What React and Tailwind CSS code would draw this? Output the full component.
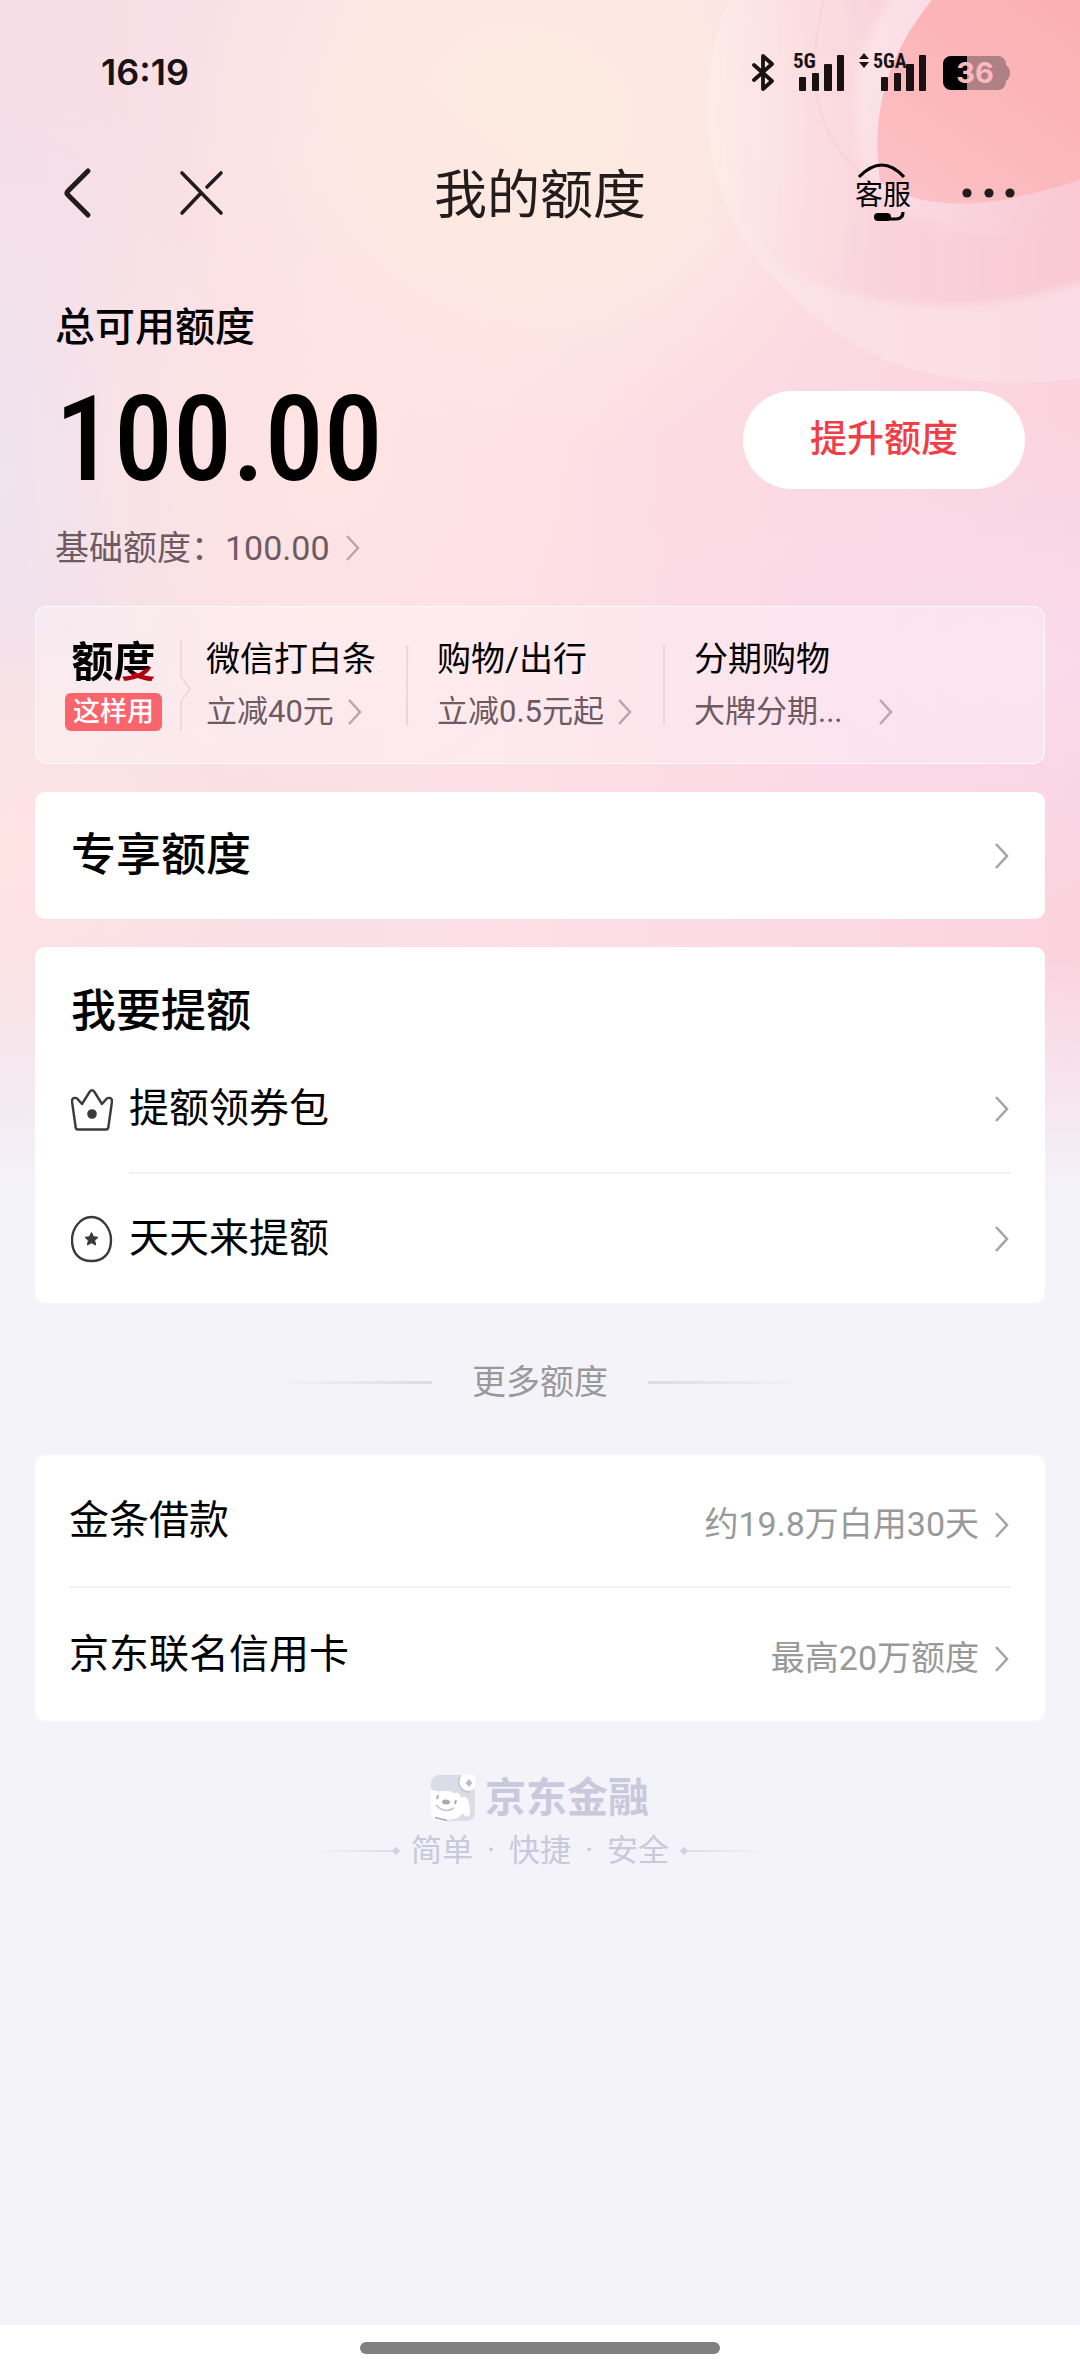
const promos = [
  { title: '微信打白条', desc: '立减40元', box: 'w-[214px] pl-[14px]', gap: 'gap-[14px]' },
  { title: '购物/出行', desc: '立减0.5元起', box: 'w-[255px] pl-[29px]', gap: 'gap-[14px]' },
  { title: '分期购物', desc: '大牌分期...', box: 'flex-1 pl-[29px]', gap: 'gap-9' }
]

const moreLimits = [
  { name: '金条借款', note: '约19.8万白用30天' },
  { name: '京东联名信用卡', note: '最高20万额度' }
]

function Arrow({ className = 'text-[#a3a3a3]' }) {
  return (
    <svg className={`h-7 w-4 shrink-0 ${className}`} viewBox="0 0 16 28" fill="none" stroke="currentColor" strokeWidth="2.5">
      <path d="M1 2l11 12L1 26" />
    </svg>
  )
}

function Signal() {
  return (
    <svg className="h-10 w-[50px]" viewBox="0 0 50 40" fill="#1a1212">
      <rect x="4" y="24" width="7" height="14" rx="1" />
      <rect x="17" y="20" width="7" height="18" rx="1" />
      <rect x="29" y="11" width="8" height="27" rx="1" />
      <rect x="42" y="2" width="7" height="36" rx="1" />
    </svg>
  )
}

function StatusBar() {
  return (
    <div className="flex h-[146px] items-center justify-between pl-[101px] pr-[70px]">
      <span className="pb-[2px] font-['Inter'] text-[36px] font-semibold text-[#1a1212]">16:19</span>
      <div className="flex items-center">
        <svg className="mr-5 h-10 w-6" viewBox="0 0 24 40" fill="none" stroke="#1a1212" strokeWidth="3.8" strokeLinecap="round" strokeLinejoin="round">
          <path d="M3 12l18 16-9 8V3l9 8L3 27" />
        </svg>
        <div className="relative">
          <Signal />
          <span className="absolute -left-[2px] top-0 font-['Roboto_Condensed','Roboto'] text-[21px] font-bold leading-4 text-[#1a1212]">5G</span>
        </div>
        <div className="relative ml-8">
          <Signal />
          <svg className="absolute -left-[18px] top-0 h-4 w-[10px]" viewBox="0 0 10 16" fill="#1a1212">
            <path d="M5 0l5 6H0zM5 15l5-6H0z" />
          </svg>
          <span className="absolute -left-1 top-0 font-['Roboto_Condensed','Roboto'] text-[20px] font-bold leading-4 text-[#1a1212]">5GA</span>
        </div>
        <svg className="ml-4 h-9 w-[67px]" viewBox="0 0 67 36">
          <path d="M8 1h47a8 8 0 0 1 8 8v1q4 3 4 8t-4 8v1a8 8 0 0 1-8 8H8a8 8 0 0 1-8-8V9a8 8 0 0 1 8-8z" fill="#ad8186" />
          <path d="M8 1h16v34H8a8 8 0 0 1-8-8V9a8 8 0 0 1 8-8z" fill="#000" />
          <text x="32" y="28" textAnchor="middle" fontFamily="Inter" fontWeight="700" fontSize="29" fill="#fdb9bc">36</text>
        </svg>
      </div>
    </div>
  )
}

function NavBar() {
  return (
    <header className="grid h-[100px] grid-cols-[1fr_auto_1fr] items-center">
      <div className="flex items-center pb-[6px]">
        <button aria-label="返回" className="ml-[62px]">
          <svg className="h-[54px] w-8" viewBox="0 0 32 54" fill="none" stroke="#231c1c" strokeWidth="5" strokeLinecap="round" strokeLinejoin="round">
            <path d="M26 5L6 25q-2 2 0 4l20 20" />
          </svg>
        </button>
        <button aria-label="关闭" className="ml-[84px]">
          <svg className="h-12 w-12" viewBox="0 0 48 48" fill="none" stroke="#231c1c" strokeWidth="3.6" strokeLinecap="round">
            <path d="M4 4l39 40M43 4L29 18M23 24L4 44" />
          </svg>
        </button>
      </div>
      <h1 className="text-[53px] leading-[64px] text-[#231c1c]">我的额度</h1>
      <div className="flex items-center justify-end pr-[64px]">
        <button className="relative text-[28px] leading-9 text-black">
          客服
          <svg className="absolute -top-4 left-0 h-[60px] w-14" viewBox="0 0 56 60" fill="none" stroke="#000">
            <path d="M4 15Q27-9 49 15" strokeWidth="3.2" />
            <path d="M30 57h11q7 0 7-7" strokeWidth="3.2" />
            <rect x="19" y="51" width="17" height="8" rx="4" fill="#000" stroke="none" />
          </svg>
        </button>
        <button aria-label="更多" className="ml-[51px] pb-[6px]">
          <svg className="h-3 w-[54px]" viewBox="0 0 54 12" fill="#231c1c">
            <circle cx="5" cy="6" r="4.6" />
            <circle cx="27" cy="6" r="4.6" />
            <circle cx="48" cy="6" r="4.6" />
          </svg>
        </button>
      </div>
    </header>
  )
}

function Backdrop() {
  return (
    <svg className="absolute left-0 top-0 -z-10 h-[1200px] w-full" viewBox="0 0 1080 1200" preserveAspectRatio="none">
      <defs>
        <radialGradient id="peach">
          <stop offset="0" stopColor="#fdebe1" />
          <stop offset="0.4" stopColor="#fdebe1" stopOpacity="0.85" />
          <stop offset="1" stopColor="#fdebe1" stopOpacity="0" />
        </radialGradient>
        <radialGradient id="blush">
          <stop offset="0" stopColor="#ffe4e3" />
          <stop offset="1" stopColor="#ffe4e3" stopOpacity="0" />
        </radialGradient>
        <radialGradient id="mist">
          <stop offset="0" stopColor="#efe4ef" />
          <stop offset="1" stopColor="#efe4ef" stopOpacity="0" />
        </radialGradient>
        <radialGradient id="violet">
          <stop offset="0" stopColor="#f9daeb" />
          <stop offset="1" stopColor="#f9daeb" stopOpacity="0" />
        </radialGradient>
        <linearGradient id="base" x1="0" x2="1" y1="0" y2="0">
          <stop offset="0" stopColor="#f6dee6" />
          <stop offset="0.45" stopColor="#fde0e7" />
          <stop offset="1" stopColor="#fbd3df" />
        </linearGradient>
        <linearGradient id="fade" x1="0" x2="0" y1="0" y2="1">
          <stop offset="0" stopColor="#f3f3f9" stopOpacity="0" />
          <stop offset="1" stopColor="#f3f3f9" />
        </linearGradient>
        <linearGradient id="petal" x1="0" x2="1" y1="0" y2="0">
          <stop offset="0" stopColor="#f7c3ce" stopOpacity="0" />
          <stop offset="0.45" stopColor="#f7c3ce" stopOpacity="0.45" />
          <stop offset="1" stopColor="#f7bcc8" stopOpacity="0.65" />
        </linearGradient>
        <linearGradient id="swirl" x1="0" x2="1" y1="0" y2="0.6">
          <stop offset="0" stopColor="#fff" stopOpacity="0.4" />
          <stop offset="1" stopColor="#fff" stopOpacity="0" />
        </linearGradient>
        <linearGradient id="disc" x1="0" x2="0.7" y1="1" y2="0">
          <stop offset="0" stopColor="#fbc2c8" />
          <stop offset="0.5" stopColor="#fcb8bb" />
          <stop offset="1" stopColor="#fbb1b3" />
        </linearGradient>
        <filter id="soft" x="-10%" y="-10%" width="120%" height="120%">
          <feGaussianBlur stdDeviation="4" />
        </filter>
      </defs>
      <rect width="1080" height="1200" fill="url(#base)" />
      <ellipse cx="0" cy="480" rx="260" ry="420" fill="url(#mist)" />
      <ellipse cx="540" cy="120" rx="380" ry="340" fill="url(#peach)" />
      <ellipse cx="330" cy="450" rx="330" ry="380" fill="url(#blush)" />
      <ellipse cx="0" cy="850" rx="300" ry="260" fill="url(#blush)" />
      <ellipse cx="1040" cy="660" rx="480" ry="240" fill="url(#violet)" />
      <path d="M732-10C690 90 702 190 760 262C830 340 900 400 1090 378V-10z" fill="#fff" opacity="0.2" />
      <g filter="url(#soft)">
        <path d="M745-20C705 100 715 200 775 265C840 300 960 330 1100 275V-20z" fill="url(#petal)" />
        <path d="M905-20C840 60 850 120 866 180C890 215 940 245 1100 240V-20z" fill="url(#swirl)" />
      </g>
      <path d="M940-10C880 60 872 120 880 182C930 215 1000 208 1090 176V-10z" fill="url(#disc)" />
      <path d="M826-10C800 90 820 140 868 180" fill="none" stroke="#f9d2d6" strokeWidth="2" />
      <rect y="960" width="1080" height="240" fill="url(#fade)" />
    </svg>
  )
}

function Summary() {
  return (
    <section className="pl-[55px] pr-[55px] pt-[54px]">
      <p className="text-[40px] font-medium leading-[56px]">总可用额度</p>
      <div className="mt-6 flex items-center justify-between">
        <span className="font-['Roboto_Condensed','Roboto'] text-[118px] font-medium leading-[120px]">100.00</span>
        <button className="h-[98px] w-[282px] rounded-full bg-white text-[37px] font-medium text-[#f13e46]">提升额度</button>
      </div>
      <a href="#base" className="mt-6 flex items-center gap-4 text-[34px] leading-[48px] text-[#6e5a62]">
        基础额度：100.00
        <Arrow className="text-[#b9a5ad]" />
      </a>
    </section>
  )
}

function PromoStrip() {
  return (
    <section className="mt-[34px] flex h-[158px] items-center rounded-[12px] border border-white/80 bg-white/30 pl-[29px]">
      <div className="flex w-[97px] shrink-0 flex-col items-center">
        <strong className="bg-linear-[160deg] from-black from-70% to-[#b00010] to-74% bg-clip-text text-[42px] font-bold leading-[48px] text-transparent">额度</strong>
        <span className="mt-[6px] w-full rounded-[6px] bg-[#fa646c] text-center text-[27px] font-medium leading-[38px] text-white">这样用</span>
      </div>
      <svg className="ml-[18px] h-[92px] w-3 shrink-0" viewBox="0 0 12 92" fill="none" stroke="#f5d0d9" strokeWidth="1.5">
        <path d="M1 0v38l9 12-9 12v30" />
      </svg>
      {promos.map((item, i) => (
        <div key={item.title} className={`flex items-center ${i === 2 ? 'flex-1' : 'shrink-0'}`}>
          {i > 0 && <span className="h-20 w-[2px] bg-[#f7d0dc]" />}
          <a href="#promo" className={`flex flex-col whitespace-nowrap ${item.box}`}>
            <span className="text-[34px] leading-[42px]">{item.title}</span>
            <span className={`mt-3 flex items-center text-[31px] leading-10 text-[#6e5a62] ${item.gap}`}>
              {item.desc}
              <Arrow className="text-[#b9a5ad]" />
            </span>
          </a>
        </div>
      ))}
    </section>
  )
}

function CrownIcon() {
  return (
    <svg className="h-12 w-[42px] shrink-0" viewBox="0 0 42 48" fill="none" stroke="#3a3a3a" strokeWidth="2.4" strokeLinejoin="round">
      <path d="M7 43.500h28q2 0 2.300-2L41 15.500q.4-3-2.500-3.600-2.300-.4-3.600 1.700L31 18l-7.500-12q-2.500-3.500-5 0L11 18l-3.900-4.400q-1.300-2.100-3.600-1.700-2.900.6-2.500 3.600L4.700 41.500q.3 2 2.300 2z" />
      <circle cx="21" cy="28" r="4.8" fill="#3a3a3a" stroke="none" />
    </svg>
  )
}

function EggIcon() {
  return (
    <svg className="h-12 w-[42px] shrink-0" viewBox="0 0 42 48" fill="none" stroke="#3a3a3a" strokeWidth="2.4">
      <path d="M20.500 2C32 2 40 14 40 25C40 38 33 46 20.500 46S1 38 1 25C1 14 9 2 20.500 2z" />
      <path d="M20.500 17.500l2 4.200 4.500.6-3.300 3.200.9 4.500-4.100-2.200-4.100 2.200.9-4.500-3.300-3.200 4.500-.6z" fill="#3a3a3a" strokeWidth="1" />
    </svg>
  )
}

function Footer() {
  return (
    <footer className="mt-[52px] flex flex-col items-center text-[#c9c8dd]">
      <div className="flex items-center gap-[10px]">
        <svg className="h-[46px] w-11" viewBox="0 0 44 46">
          <rect width="44" height="46" rx="8" fill="#dcdbe8" />
          <path d="M0 14q4 3 10 2 8-1 13 2 6-1 7 5 3-2 6 0 3 6 3 14 0 6-4 4-2 0-4-3-2 6-10 6-5 2-13 2-8-1-8-8z" fill="#fff" />
          <circle cx="37" cy="7" r="9" fill="#fff" />
          <path d="M29 2q-3 6 1 11 3 4 9 4" fill="none" stroke="#c4c3d2" strokeWidth="1.5" />
          <path d="M38 4l3.500 4-3.500 4-3.500-4z" fill="#bdbccd" />
          <ellipse cx="15" cy="27" rx="4" ry="2.500" transform="rotate(8 15 27)" fill="#a9a9b5" />
          <path d="M7 20l-1 4M25 25l-1 4" stroke="#a9a9b5" strokeWidth="2" />
          <path d="M5 30q8 9 18 3" fill="none" stroke="#c4c4cf" strokeWidth="1.500" />
          <path d="M4 42.500l12 3" stroke="#a9a9b5" strokeWidth="1.500" />
        </svg>
        <span className="text-[41px] font-bold leading-[50px]">京东金融</span>
      </div>
      <div className="mt-2 flex items-center gap-3">
        <div className="flex items-center">
          <span className="h-[2px] w-[76px] bg-linear-to-r from-transparent to-[#dddce9]" />
          <span className="size-[6px] rotate-45 bg-[#d3d2e2]" />
        </div>
        <p className="flex gap-[14px] text-[31px] leading-10">
          <span>简单</span>
          <span>·</span>
          <span>快捷</span>
          <span>·</span>
          <span>安全</span>
        </p>
        <div className="flex items-center">
          <span className="size-[6px] rotate-45 bg-[#d3d2e2]" />
          <span className="h-[2px] w-[76px] bg-linear-to-l from-transparent to-[#dddce9]" />
        </div>
      </div>
    </footer>
  )
}

export default function App() {
  return (
    <div className="relative isolate flex min-h-screen flex-col overflow-hidden bg-[#f3f3f9] font-['Roboto','Noto_Sans_CJK_SC',sans-serif] text-black">
      <Backdrop />
      <StatusBar />
      <NavBar />
      <Summary />

      <main className="flex flex-col px-[35px]">
        <PromoStrip />

        <a href="#exclusive" className="mt-7 flex h-[127px] items-center justify-between rounded-[10px] bg-white pl-9 pr-[34px]">
          <h2 className="text-[45px] font-medium leading-[60px]">专享额度</h2>
          <Arrow />
        </a>

        {/* 提额入口 */}
        <section className="mt-7 rounded-[10px] bg-white pl-9 pr-[34px] pt-8">
          <h2 className="text-[45px] font-medium leading-[66px]">我要提额</h2>
          <a href="#coupon" className="flex h-[129px] items-center gap-4">
            <CrownIcon />
            <span className="flex h-full flex-1 items-center justify-between border-b-2 border-[#f2f2f4] text-[40px]">
              提额领券包
              <Arrow />
            </span>
          </a>
          <a href="#daily" className="flex h-[129px] items-center gap-4">
            <EggIcon />
            <span className="flex h-full flex-1 items-center justify-between text-[40px]">
              天天来提额
              <Arrow />
            </span>
          </a>
        </section>

        <div className="mt-[54px] flex items-center justify-center gap-10 text-[34px] leading-[50px] text-[#999]">
          <span className="h-[3px] w-40 bg-linear-to-r from-transparent to-[#dcdce0]" />
          更多额度
          <span className="h-[3px] w-40 bg-linear-to-l from-transparent to-[#dcdce0]" />
        </div>

        <section className="mt-12 rounded-[10px] bg-white px-[34px]">
          {moreLimits.map((row) => (
            <a key={row.name} href="#more" className="flex h-[133px] items-center border-b-2 border-[#f2f2f4] last:border-b-0">
              <span className="flex-1 text-[40px]">{row.name}</span>
              <span className="flex items-center gap-4 pt-2 text-[34px] text-[#999]">
                {row.note}
                <Arrow />
              </span>
            </a>
          ))}
        </section>
        <Footer />
      </main>

      <div className="mt-auto flex h-12 items-center justify-center bg-white pb-[2px]">
        <span className="h-3 w-1/3 rounded-full bg-[#808080]" />
      </div>
    </div>
  )
}
